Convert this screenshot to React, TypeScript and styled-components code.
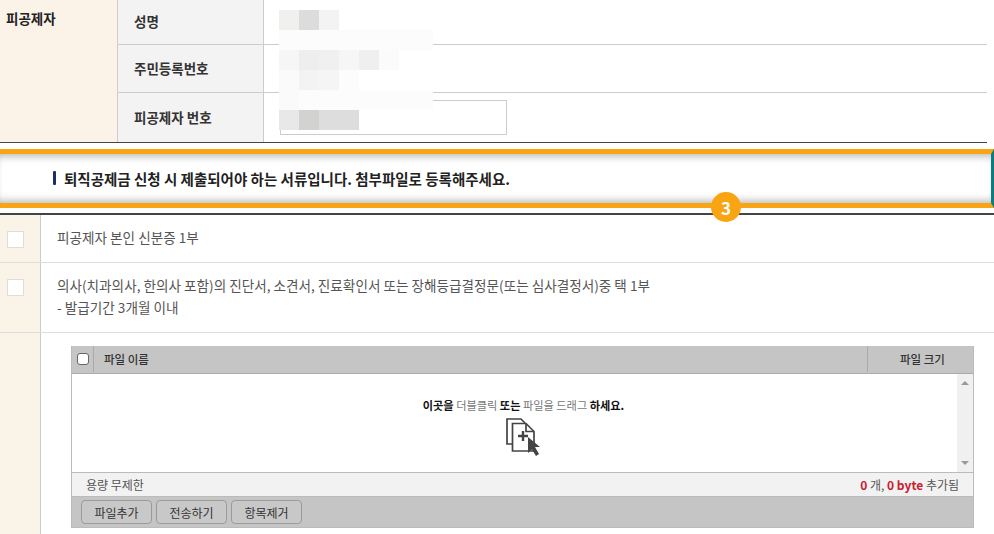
import React from 'react';
import styled, { createGlobalStyle } from 'styled-components';

const GlobalStyle = createGlobalStyle`
  html, body {
    margin: 0;
    padding: 0;
    background: #fff;
  }
  body {
    font-family: 'Noto Sans CJK KR', 'Noto Sans', sans-serif;
    color: #333;
  }
  * {
    box-sizing: border-box;
  }
`;

const Page = styled.div`
  position: relative;
  width: 994px;
  height: 534px;
  overflow: hidden;
  background: #fff;
`;

const InfoTable = styled.div`
  width: 987px;
  display: grid;
  grid-template-columns: 118px 146px 1fr;
  grid-template-rows: 45px 48px 49px;
  border-bottom: 1px solid #444;
`;
const OwnerCell = styled.div`
  grid-row: 1 / 4;
  background: #fbf3e8;
  border-right: 1px solid #ccc;
  padding: 8px 6px;
  font-size: 13.5px;
  line-height: 20px;
  font-weight: 700;
  color: #222;
`;
const LabelCell = styled.div<{ $last?: boolean }>`
  display: flex;
  align-items: center;
  padding: 0 0 2px 16px;
  background: #f3f3f3;
  border-right: 1px solid #ccc;
  border-bottom: ${(p) => (p.$last ? 'none' : '1px solid #ccc')};
  font-size: 13.5px;
  font-weight: 700;
  color: #333;
`;
const ValueCell = styled.div<{ $last?: boolean }>`
  display: flex;
  align-items: center;
  padding-left: 16px;
  border-bottom: ${(p) => (p.$last ? 'none' : '1px solid #ccc')};
`;
const NumberInput = styled.div`
  width: 227px;
  height: 35px;
  border: 1px solid #ccc;
  background: #fff;
`;

const Mosaic = styled.div`
  position: absolute;
  top: 10px;
  left: 279px;
  width: 154px;
  overflow: hidden;
`;
const MosaicRow = styled.div`
  display: flex;
  height: 20px;
`;
const MosaicBlock = styled.div<{ $c: string }>`
  flex: 0 0 20px;
  background: ${(p) => p.$c};
`;

const NoticeBand = styled.div`
  margin-top: 6px;
  height: 59px;
  display: flex;
  align-items: center;
  padding: 0 0 1px 53px;
  border-top: 5px solid #f9a413;
  border-bottom: 5px solid #f9a413;
  border-right: 3px solid #0b7c80;
  box-shadow: inset 0 8px 8px -6px #b5b5b5, inset 0 -8px 8px -6px #b5b5b5;
  font-size: 14.5px;
  font-weight: 700;
  color: #222;
`;
const NoticeBar = styled.span`
  width: 3px;
  height: 14px;
  margin-right: 8px;
  border-radius: 1px;
  background: #1c2f66;
`;
const StepBadge = styled.div`
  position: absolute;
  left: 711px;
  top: 192px;
  width: 30px;
  height: 30px;
  border-radius: 50%;
  background: #f9a413;
  color: #fff;
  font-size: 17px;
  font-weight: 700;
  display: flex;
  align-items: center;
  justify-content: center;
`;

const DocTable = styled.div`
  margin-top: 5px;
  border-top: 2px solid #444;
`;
const DocRow = styled.div<{ $height: number }>`
  display: grid;
  grid-template-columns: 41px 1fr;
  height: ${(p) => p.$height}px;
  border-bottom: 1px solid #ddd;
`;
const CheckCell = styled.div`
  background: #f9f3e8;
  border-right: 1px solid #ccc;
  padding: 16px 0 0 7px;
`;
const CheckBox = styled.div`
  width: 17px;
  height: 17px;
  background: #fff;
  border: 1px solid #e2ddd4;
`;
const DocText = styled.div`
  padding: 11px 0 0 16px;
  font-size: 13.6px;
  line-height: 22px;
  color: #555;
`;
const UploadRow = styled.div`
  display: grid;
  grid-template-columns: 41px 1fr;
  height: 201px;
`;
const SpacerCell = styled.div`
  background: #f9f3e8;
  border-right: 1px solid #ccc;
`;
const UploadCell = styled.div`
  padding: 13px 0 0 30px;
`;

const Uploader = styled.div`
  width: 903px;
  height: 182px;
  display: flex;
  flex-direction: column;
  border: 1px solid #bbb;
  border-top: none;
  font-size: 11.5px;
  color: #333;
`;
const UploaderHead = styled.div`
  height: 28px;
  padding-bottom: 1px;
  display: flex;
  align-items: center;
  background: #c5c5c5;
  border-bottom: 1px solid #aaa;
  font-weight: 500;
`;
const HeadCheckCell = styled.div`
  width: 22px;
  height: 100%;
  display: flex;
  align-items: center;
  justify-content: center;
  border-right: 1px solid #aaa;
`;
const HeadCheck = styled.div`
  width: 12px;
  height: 12px;
  background: #fff;
  border: 1px solid #666;
  border-radius: 3px;
`;
const HeadName = styled.div`
  flex: 1;
  padding-left: 10px;
`;
const HeadSize = styled.div`
  width: 106px;
  height: 100%;
  display: flex;
  align-items: center;
  justify-content: center;
  padding-left: 4px;
  border-left: 1px solid #aaa;
`;
const DropZone = styled.div`
  height: 99px;
  display: flex;
  border-bottom: 1px solid #bbb;
`;
const DropMessage = styled.div`
  flex: 1;
  display: flex;
  flex-direction: column;
  align-items: center;
  padding: 23px 0 0 18px;
  font-size: 11.2px;
  line-height: 16px;
  color: #777;
  b {
    color: #111;
  }
  svg {
    margin-top: 5px;
  }
`;
const ScrollTrack = styled.div`
  width: 16px;
  display: flex;
  flex-direction: column;
  justify-content: space-between;
  align-items: center;
  padding: 7px 0;
  background: #f0f0f0;
`;
const ScrollArrow = styled.div<{ $down?: boolean }>`
  width: 0;
  height: 0;
  border-left: 4px solid transparent;
  border-right: 4px solid transparent;
  ${(p) => (p.$down ? 'border-top: 4px solid #999;' : 'border-bottom: 4px solid #999;')}
`;
const StatusBar = styled.div`
  height: 24px;
  display: flex;
  align-items: center;
  justify-content: space-between;
  padding: 0 14px;
  background: #f2f2f2;
  border-bottom: 1px solid #bbb;
  font-size: 12px;
  color: #555;
`;
const Red = styled.b`
  color: #c8202f;
`;
const ButtonBar = styled.div`
  flex: 1;
  display: flex;
  align-items: center;
  gap: 4px;
  padding-left: 9px;
  background: #c5c5c5;
`;
const BarButton = styled.div`
  width: 71px;
  height: 24px;
  display: flex;
  align-items: center;
  justify-content: center;
  border: 1px solid #9b9b9b;
  border-radius: 4px;
  background: #c8c8c8;
  font-size: 12px;
  color: #333;
`;

const mosaicRows = [
  ['#f0f0ee', '#dcdcdc', '#f3f3f3'],
  ['#fcfcfc', '#fcfcfc', '#fcfcfc', '#fcfcfc', '#fcfcfc', '#fcfcfc', '#fcfcfc', '#fcfcfc'],
  ['#f6f6f6', '#eeeeee', '#f0f0f0', '#f6f6f6', '#efefef', '#fbfbfb'],
  ['#fafafa', '#f3f3f3', '#f5f5f5', '#fcfcfc'],
  ['#fafafa', '#fcfcfc', '#fcfcfc', '#fcfcfc', '#fcfcfc', '#fcfcfc', '#fcfcfc', '#fcfcfc'],
  ['#e8e8e8', '#d2d2d0', '#dcdddc', '#dcdddc'],
];

const AddFileIcon = () => (
  <svg width="35" height="38" viewBox="0 0 35 38" fill="none" stroke="#444" strokeWidth="1.7">
    <path d="M6 26H1V1H15L19 5" />
    <path d="M6.5 5.5H20L28 13.5V33H6.5Z" fill="#fff" />
    <path d="M20 5.5V13.5H28" />
    <path d="M17 13V23M12 18H22" strokeWidth="2.4" />
    <path d="M22 19L34 29H29L33 36L30 38L26 31.5L22 35Z" fill="#444" stroke="none" />
  </svg>
);

export default function App() {
  return (
    <Page>
      <GlobalStyle />
      <InfoTable>
        <OwnerCell>피공제자</OwnerCell>
        <LabelCell>성명</LabelCell>
        <ValueCell />
        <LabelCell>주민등록번호</LabelCell>
        <ValueCell />
        <LabelCell $last>피공제자 번호</LabelCell>
        <ValueCell $last>
          <NumberInput />
        </ValueCell>
      </InfoTable>
      <Mosaic>
        {mosaicRows.map((row, i) => (
          <MosaicRow key={i}>
            {row.map((c, j) => (
              <MosaicBlock key={j} $c={c} />
            ))}
          </MosaicRow>
        ))}
      </Mosaic>

      <NoticeBand>
        <NoticeBar />
        퇴직공제금 신청 시 제출되어야 하는 서류입니다. 첨부파일로 등록해주세요.
      </NoticeBand>
      <StepBadge>3</StepBadge>

      <DocTable>
        <DocRow $height={48}>
          <CheckCell>
            <CheckBox />
          </CheckCell>
          <DocText>피공제자 본인 신분증 1부</DocText>
        </DocRow>
        <DocRow $height={70}>
          <CheckCell>
            <CheckBox />
          </CheckCell>
          <DocText>
            의사(치과의사, 한의사 포함)의 진단서, 소견서, 진료확인서 또는 장해등급결정문(또는 심사결정서)중 택 1부
            <br />- 발급기간 3개월 이내
          </DocText>
        </DocRow>
        <UploadRow>
          <SpacerCell />
          <UploadCell>
            <Uploader>
              <UploaderHead>
                <HeadCheckCell>
                  <HeadCheck />
                </HeadCheckCell>
                <HeadName>파일 이름</HeadName>
                <HeadSize>파일 크기</HeadSize>
              </UploaderHead>
              <DropZone>
                <DropMessage>
                  <div>
                    <b>이곳을</b> 더블클릭 <b>또는</b> 파일을 드래그 <b>하세요.</b>
                  </div>
                  <AddFileIcon />
                </DropMessage>
                <ScrollTrack>
                  <ScrollArrow />
                  <ScrollArrow $down />
                </ScrollTrack>
              </DropZone>
              <StatusBar>
                <span>용량 무제한</span>
                <span>
                  <Red>0</Red> 개, <Red>0 byte</Red> 추가됨
                </span>
              </StatusBar>
              <ButtonBar>
                <BarButton>파일추가</BarButton>
                <BarButton>전송하기</BarButton>
                <BarButton>항목제거</BarButton>
              </ButtonBar>
            </Uploader>
          </UploadCell>
        </UploadRow>
      </DocTable>
    </Page>
  );
}
